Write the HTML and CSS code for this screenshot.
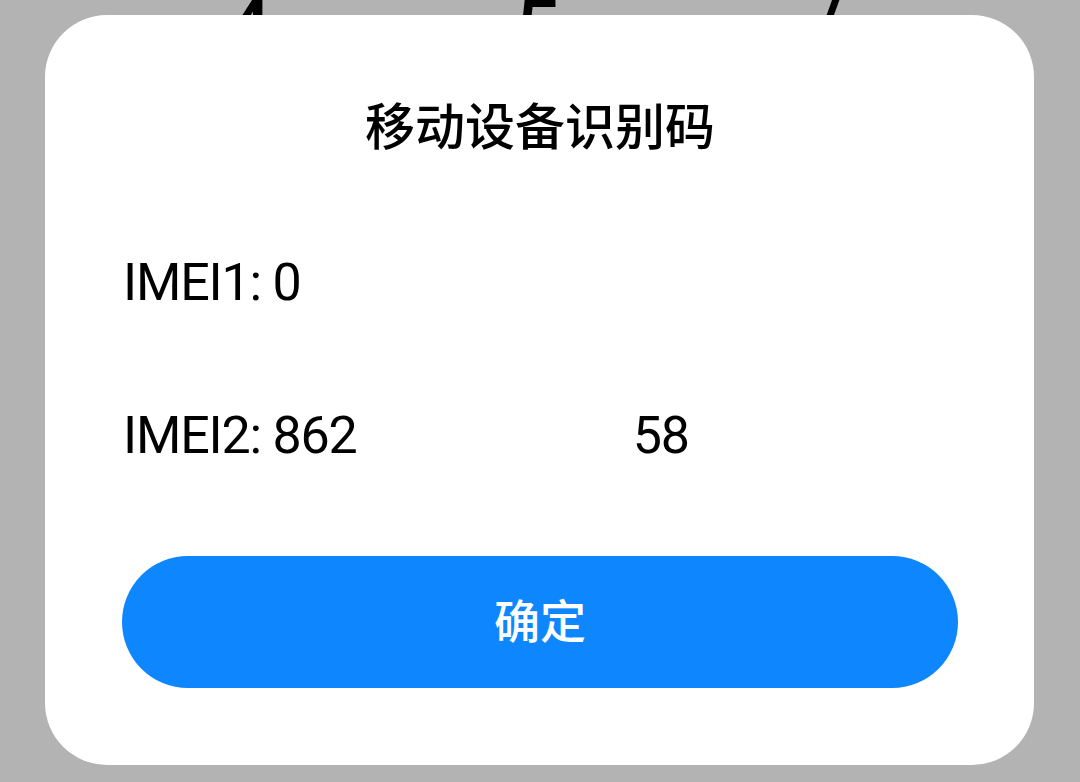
FILE: index.html
```html
<!DOCTYPE html>
<html lang="zh">
<head>
<meta charset="utf-8">
<link rel="stylesheet" href="styles.css">
</head>
<body>
<div class="backdrop">
  <span class="bg-digit d4">4</span>
  <span class="bg-digit d5">5</span>
  <span class="bg-digit d7">/</span>
</div>
<div class="dialog">
  <div class="title">移动设备识别码</div>
  <div class="row first">IMEI1: 0</div>
  <div class="row second">IMEI2: 862<span class="masked"></span>58</div>
  <div class="button">确定</div>
</div>
</body>
</html>
```

FILE: styles.css
```css
html, body {
  margin: 0;
  padding: 0;
}
body {
  width: 1080px;
  height: 782px;
  background: #b3b3b3;
  overflow: hidden;
  position: relative;
  font-family: "Roboto", "Noto Sans CJK SC", sans-serif;
  color: #000;
}
.backdrop {
  position: absolute;
  left: 0;
  top: 0;
  width: 1080px;
  height: 60px;
}
.bg-digit {
  position: absolute;
  top: -11px;
  font-family: "Roboto", sans-serif;
  font-weight: 500;
  font-size: 80px;
  line-height: 80px;
  color: #000;
}
.d4 { left: 226px; }
.d5 { left: 515px; }
.d7 { left: 810px; }
.dialog {
  position: relative;
  margin: 15px 46px 0 45px;
  height: 750px;
  box-sizing: border-box;
  background: #fff;
  border-radius: 62px;
  padding: 78px 76px 0 77px;
  display: flex;
  flex-direction: column;
}
.title {
  text-align: center;
  font-family: "Noto Sans CJK SC", sans-serif;
  font-weight: 500;
  font-size: 50px;
  line-height: 60px;
  height: 60px;
}
.row {
  font-size: 52px;
  letter-spacing: -1.2px;
  line-height: 60px;
  height: 60px;
  padding-left: 1px;
  white-space: nowrap;
}
.row.first {
  margin-top: 100px;
}
.row.second {
  margin-top: 93px;
}
.masked {
  display: inline-block;
  width: 276px;
}
.button {
  margin-top: 90px;
  height: 132px;
  box-sizing: border-box;
  padding-bottom: 8px;
  border-radius: 66px;
  background: #0e86fe;
  color: #fff;
  font-family: "Noto Sans CJK SC", sans-serif;
  font-weight: 500;
  font-size: 46px;
  display: flex;
  align-items: center;
  justify-content: center;
}
```
